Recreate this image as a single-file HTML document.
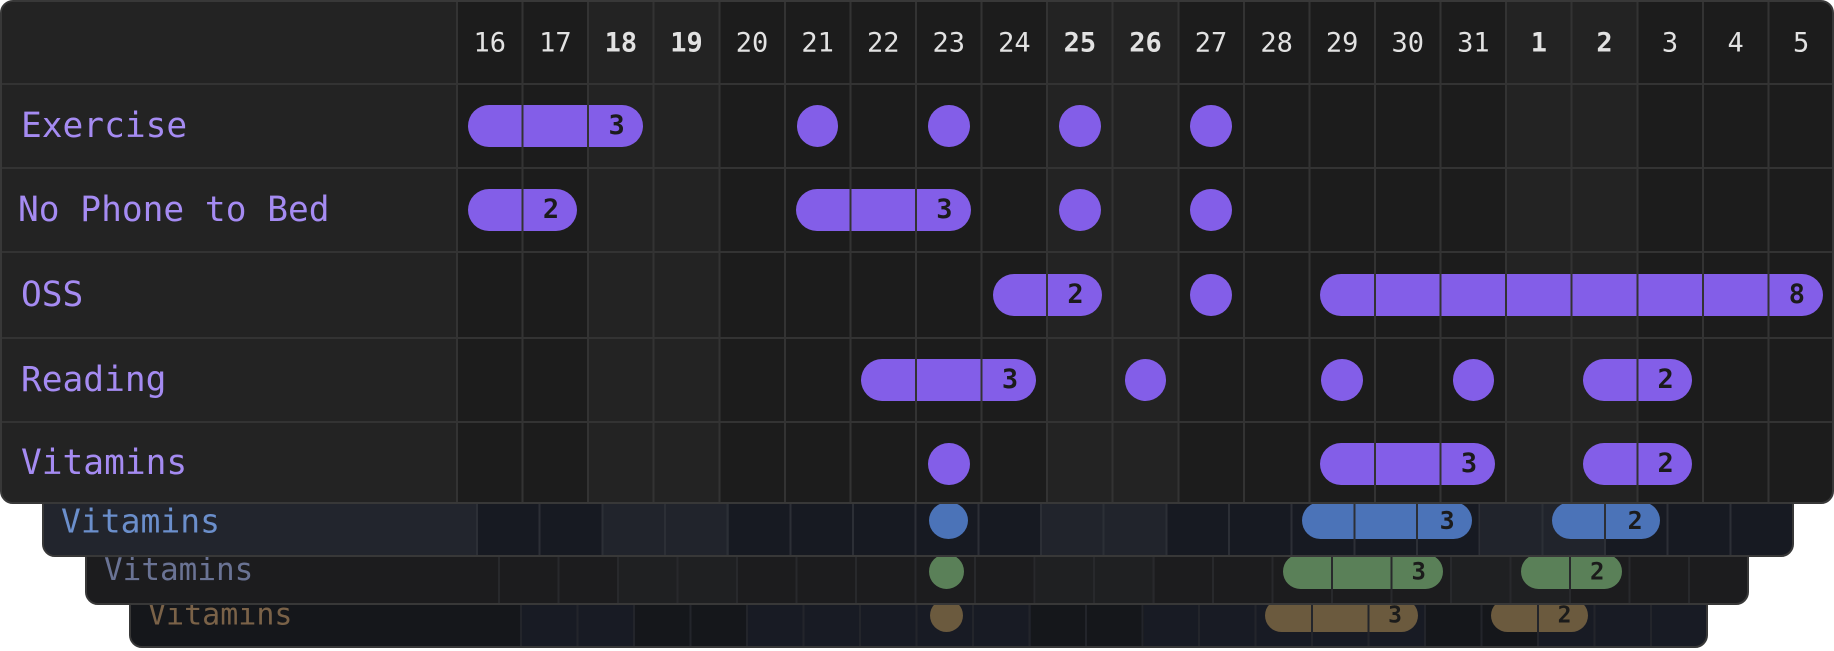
<!DOCTYPE html>
<html><head><meta charset="utf-8"><style>
*{box-sizing:border-box;margin:0;padding:0}
body{width:1834px;height:651px;background:#fff;position:relative;overflow:hidden;font-family:"DejaVu Sans Mono","Liberation Mono",monospace}
.card{position:absolute;border:2px solid #383838;border-radius:13px;overflow:hidden}
.abs{position:absolute}
.col{position:absolute;top:0;bottom:0;width:var(--cw)}
.lines{position:absolute;top:0;bottom:0;right:0;z-index:3;pointer-events:none}
.hl{position:absolute;left:0;right:0;height:2px;background:#333;z-index:3}
.p{position:absolute;z-index:2;border-radius:40px}
.p b{position:absolute;font-weight:bold;color:#1b1b1b;top:50%;transform:translateY(-52%)}
.lab{position:absolute;white-space:nowrap;transform:translateY(-50%)}
.h{position:absolute;top:41px;transform:translate(-50%,-50%);color:#e2e2e2;font-size:27px}
.h.w{font-weight:bold}
#m{left:0;top:0;width:1834px;height:504px;background:#1c1c1c;z-index:4;--lx:455px;--cw:65.57px}
#m .p{background:#835ee8;height:42px;margin-top:-21px;left:calc(var(--lx) + var(--i)*var(--cw) + 11px);width:calc(var(--n)*var(--cw) - 22px)}
#m .p.c{border-radius:50%;left:calc(var(--lx) + var(--i)*var(--cw) + 12px);width:calc(var(--cw) - 24px)}
#m .p b{font-size:27px;right:18px}
#m .lab{color:#a58bf2;font-size:34.5px;left:19px}
</style></head><body>

<!-- brown card -->
<div class="card" style="left:129px;top:490px;width:1579px;height:158px;background:#181b24;z-index:1;--lx:391px;--cw:56.5px">
 <div class="abs" style="left:0;top:0;bottom:0;width:391px;background:#15171b"></div>
 <div class="col" style="left:calc(391px + 2*56.5px);background:#15171b"></div>
 <div class="col" style="left:calc(391px + 3*56.5px);background:#15171b"></div>
 <div class="col" style="left:calc(391px + 9*56.5px);background:#15171b"></div>
 <div class="col" style="left:calc(391px + 10*56.5px);background:#15171b"></div>
 <div class="col" style="left:calc(391px + 16*56.5px);background:#15171b"></div>
 <div class="col" style="left:calc(391px + 17*56.5px);background:#15171b"></div>
 <div class="lines" style="left:389px;background:repeating-linear-gradient(to right,#23252b 0 2px,transparent 2px 56.5px)"></div>
 <div class="lab" style="left:17px;top:123px;color:#7a6248;font-size:30px">Vitamins</div>
 <div class="p" style="background:#6b5a3e;height:33px;top:107px;left:calc(391px + 7*56.5px + 12px);width:33px;border-radius:50%"></div>
 <div class="p" style="background:#6b5a3e;height:33px;top:107px;left:calc(391px + 13*56.5px + 8px);width:calc(3*56.5px - 16px)"><b style="font-size:23px;right:16px">3</b></div>
 <div class="p" style="background:#6b5a3e;height:33px;top:107px;left:calc(391px + 17*56.5px + 8px);width:calc(2*56.5px - 16px)"><b style="font-size:23px;right:16px">2</b></div>
</div>

<!-- green card -->
<div class="card" style="left:85px;top:440px;width:1664px;height:165px;background:#1c1c1e;z-index:2;--cw:59.5px">
 <div class="abs" style="left:0;top:0;bottom:0;width:413px;background:#1c1c1e"></div>
 <div class="col" style="left:calc(413px + 2*59.5px);background:#1f2022"></div>
 <div class="col" style="left:calc(413px + 3*59.5px);background:#1f2022"></div>
 <div class="col" style="left:calc(413px + 9*59.5px);background:#1f2022"></div>
 <div class="col" style="left:calc(413px + 10*59.5px);background:#1f2022"></div>
 <div class="col" style="left:calc(413px + 16*59.5px);background:#1f2022"></div>
 <div class="col" style="left:calc(413px + 17*59.5px);background:#1f2022"></div>
 <div class="lines" style="left:411px;background:repeating-linear-gradient(to right,#28292c 0 2px,transparent 2px 59.5px)"></div>
 <div class="lab" style="left:17px;top:128px;color:#6a7394;font-size:31px">Vitamins</div>
 <div class="p" style="background:#5a8058;height:35px;top:112px;left:calc(413px + 7*59.5px + 12px);width:35px;border-radius:50%"></div>
 <div class="p" style="background:#5a8058;height:35px;top:112px;left:calc(413px + 13*59.5px + 9px);width:calc(3*59.5px - 18px)"><b style="font-size:24px;right:17px">3</b></div>
 <div class="p" style="background:#5a8058;height:35px;top:112px;left:calc(413px + 17*59.5px + 9px);width:calc(2*59.5px - 18px)"><b style="font-size:24px;right:17px">2</b></div>
</div>

<!-- blue card -->
<div class="card" style="left:42px;top:380px;width:1752px;height:177px;background:#171a22;z-index:3;--cw:62.67px">
 <div class="abs" style="left:0;top:0;bottom:0;width:434px;background:#22252d"></div>
 <div class="col" style="left:calc(434px + 2*62.67px);background:#21242c"></div>
 <div class="col" style="left:calc(434px + 3*62.67px);background:#21242c"></div>
 <div class="col" style="left:calc(434px + 9*62.67px);background:#21242c"></div>
 <div class="col" style="left:calc(434px + 10*62.67px);background:#21242c"></div>
 <div class="col" style="left:calc(434px + 16*62.67px);background:#21242c"></div>
 <div class="col" style="left:calc(434px + 17*62.67px);background:#21242c"></div>
 <div class="lines" style="left:432px;background:repeating-linear-gradient(to right,#2c2f36 0 2px,transparent 2px 62.67px)"></div>
 <div class="lab" style="left:17px;top:139px;color:#6b8fcc;font-size:33px">Vitamins</div>
 <div class="p" style="background:#4b73b8;height:37px;top:120px;left:calc(434px + 7*62.67px + 12px);width:39px;border-radius:50%"></div>
 <div class="p" style="background:#4b73b8;height:37px;top:120px;left:calc(434px + 13*62.67px + 9px);width:calc(3*62.67px - 18px)"><b style="font-size:25px;right:17px">3</b></div>
 <div class="p" style="background:#4b73b8;height:37px;top:120px;left:calc(434px + 17*62.67px + 9px);width:calc(2*62.67px - 18px)"><b style="font-size:25px;right:17px">2</b></div>
</div>

<!-- main card -->
<div class="card" id="m">
 <div class="abs" style="left:0;top:0;bottom:0;width:455px;background:#232323"></div>
 <div class="col" style="left:calc(455px + 2*65.57px);background:#232323"></div>
 <div class="col" style="left:calc(455px + 3*65.57px);background:#232323"></div>
 <div class="col" style="left:calc(455px + 9*65.57px);background:#232323"></div>
 <div class="col" style="left:calc(455px + 10*65.57px);background:#232323"></div>
 <div class="col" style="left:calc(455px + 16*65.57px);background:#232323"></div>
 <div class="col" style="left:calc(455px + 17*65.57px);background:#232323"></div>
 <div class="lines" style="left:454px;background:repeating-linear-gradient(to right,#333 0 2px,transparent 2px 65.57px)"></div>
 <div class="hl" style="top:81px"></div>
 <div class="hl" style="top:165px"></div>
 <div class="hl" style="top:249px"></div>
 <div class="hl" style="top:335px"></div>
 <div class="hl" style="top:419px"></div>

 <div class="h" style="left:calc(455px + 0.5*65.57px)">16</div>
 <div class="h" style="left:calc(455px + 1.5*65.57px)">17</div>
 <div class="h w" style="left:calc(455px + 2.5*65.57px)">18</div>
 <div class="h w" style="left:calc(455px + 3.5*65.57px)">19</div>
 <div class="h" style="left:calc(455px + 4.5*65.57px)">20</div>
 <div class="h" style="left:calc(455px + 5.5*65.57px)">21</div>
 <div class="h" style="left:calc(455px + 6.5*65.57px)">22</div>
 <div class="h" style="left:calc(455px + 7.5*65.57px)">23</div>
 <div class="h" style="left:calc(455px + 8.5*65.57px)">24</div>
 <div class="h w" style="left:calc(455px + 9.5*65.57px)">25</div>
 <div class="h w" style="left:calc(455px + 10.5*65.57px)">26</div>
 <div class="h" style="left:calc(455px + 11.5*65.57px)">27</div>
 <div class="h" style="left:calc(455px + 12.5*65.57px)">28</div>
 <div class="h" style="left:calc(455px + 13.5*65.57px)">29</div>
 <div class="h" style="left:calc(455px + 14.5*65.57px)">30</div>
 <div class="h" style="left:calc(455px + 15.5*65.57px)">31</div>
 <div class="h w" style="left:calc(455px + 16.5*65.57px)">1</div>
 <div class="h w" style="left:calc(455px + 17.5*65.57px)">2</div>
 <div class="h" style="left:calc(455px + 18.5*65.57px)">3</div>
 <div class="h" style="left:calc(455px + 19.5*65.57px)">4</div>
 <div class="h" style="left:calc(455px + 20.5*65.57px)">5</div>

 <div class="lab" style="top:124px">Exercise</div>
 <div class="lab" style="top:208px;left:16px">No Phone to Bed</div>
 <div class="lab" style="top:293px">OSS</div>
 <div class="lab" style="top:378px">Reading</div>
 <div class="lab" style="top:461px">Vitamins</div>

 <!-- Exercise -->
 <div class="p" style="top:124px;--i:0;--n:3"><b>3</b></div>
 <div class="p c" style="top:124px;--i:5"></div>
 <div class="p c" style="top:124px;--i:7"></div>
 <div class="p c" style="top:124px;--i:9"></div>
 <div class="p c" style="top:124px;--i:11"></div>
 <!-- No Phone -->
 <div class="p" style="top:208px;--i:0;--n:2"><b>2</b></div>
 <div class="p" style="top:208px;--i:5;--n:3"><b>3</b></div>
 <div class="p c" style="top:208px;--i:9"></div>
 <div class="p c" style="top:208px;--i:11"></div>
 <!-- OSS -->
 <div class="p" style="top:293px;--i:8;--n:2"><b>2</b></div>
 <div class="p c" style="top:293px;--i:11"></div>
 <div class="p" style="top:293px;--i:13;--n:8"><b>8</b></div>
 <!-- Reading -->
 <div class="p" style="top:378px;--i:6;--n:3"><b>3</b></div>
 <div class="p c" style="top:378px;--i:10"></div>
 <div class="p c" style="top:378px;--i:13"></div>
 <div class="p c" style="top:378px;--i:15"></div>
 <div class="p" style="top:378px;--i:17;--n:2"><b>2</b></div>
 <!-- Vitamins -->
 <div class="p c" style="top:462px;--i:7"></div>
 <div class="p" style="top:462px;--i:13;--n:3"><b>3</b></div>
 <div class="p" style="top:462px;--i:17;--n:2"><b>2</b></div>
</div>
</body></html>
